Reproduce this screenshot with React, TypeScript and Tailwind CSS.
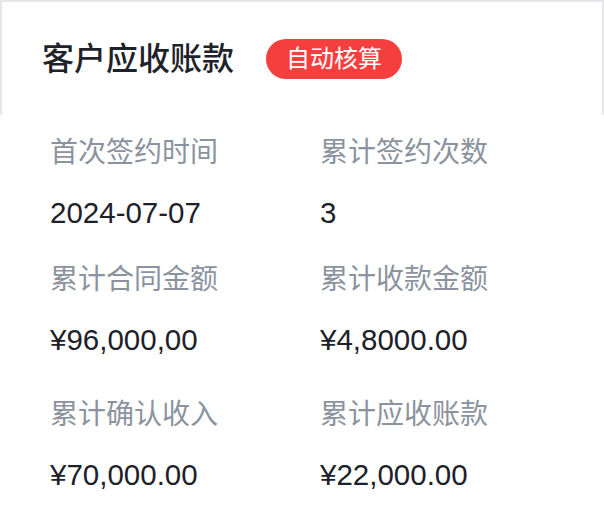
import React from 'react';

const font = { fontFamily: '"Liberation Sans", "Noto Sans CJK SC", sans-serif' };

const items = [
  { label: '首次签约时间', value: '2024-07-07', mt: 'mt-[18px]' },
  { label: '累计签约次数', value: '3', mt: 'mt-[18px]' },
  { label: '累计合同金额', value: '¥96,000,00', mt: 'mt-[27px]' },
  { label: '累计收款金额', value: '¥4,8000.00', mt: 'mt-[27px]' },
  { label: '累计确认收入', value: '¥70,000.00', mt: 'mt-[35px]' },
  { label: '累计应收账款', value: '¥22,000.00', mt: 'mt-[35px]' },
];

const App = () => {
  return (
    <div className="w-[604px] h-[530px] bg-white" style={font}>
      {/* header card */}
      <div className="bg-[#e5e7eb] pt-[2px] px-[2px]">
        <div className="bg-white h-[113px] flex items-center pl-[40px] gap-[32px]">
          <span className="text-[32px] font-medium text-[#1f2329] leading-none">客户应收账款</span>
          <span className="bg-[#f53f3f] text-white text-[24px] leading-[24px] px-[20px] py-[8px] rounded-full">
            自动核算
          </span>
        </div>
      </div>

      {/* stats */}
      <div className="grid grid-cols-[270px_1fr] pl-[50px]">
        {items.map((it) => (
          <div key={it.label} className={`flex flex-col gap-[20px] ${it.mt}`}>
            <span className="text-[28px] leading-[40px] text-[#8b939e]">{it.label}</span>
            <span className="text-[29.5px] leading-[40px] text-[#1d2129]">{it.value}</span>
          </div>
        ))}
      </div>
    </div>
  );
};

export default App;
